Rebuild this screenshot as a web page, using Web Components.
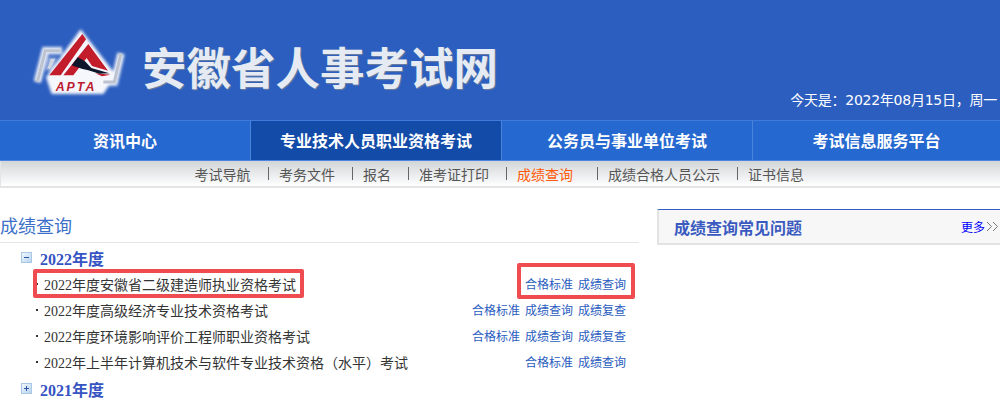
<!DOCTYPE html>
<html lang="zh-CN">
<head>
<meta charset="utf-8">
<title>成绩查询</title>
<style>
    html, body { margin: 0; background: #fff; overflow: hidden; }
    body { width: 1000px; height: 404px; font-family: "Liberation Serif", "Noto Sans CJK SC", sans-serif; }
</style>
</head>
<body>
<site-header></site-header>
<main-nav>
    <nav-cell>资讯中心</nav-cell>
    <nav-cell active>专业技术人员职业资格考试</nav-cell>
    <nav-cell>公务员与事业单位考试</nav-cell>
    <nav-cell>考试信息服务平台</nav-cell>
</main-nav>
<sub-nav></sub-nav>
<page-body>
    <result-panel>
        <year-group label="2022年度" open>
            <exam-row links="合格标准,成绩查询" marked>2022年度安徽省二级建造师执业资格考试</exam-row>
            <exam-row links="合格标准,成绩查询,成绩复查">2022年度高级经济专业技术资格考试</exam-row>
            <exam-row links="合格标准,成绩查询,成绩复查">2022年度环境影响评价工程师职业资格考试</exam-row>
            <exam-row links="合格标准,成绩查询">2022年上半年计算机技术与软件专业技术资格（水平）考试</exam-row>
        </year-group>
        <year-group label="2021年度"></year-group>
    </result-panel>
    <faq-panel></faq-panel>
</page-body>

<script>
class SiteHeader extends HTMLElement {
    constructor() {
        super();
        this.attachShadow({ mode: 'open' });
        this.shadowRoot.innerHTML = `
            <style>
                :host {
                    display: flex;
                    height: 120px;
                    box-sizing: border-box;
                    padding: 20px 3px 0 20px;
                    background: #2c5ebf;
                }
                svg { flex: none; display: block; }
                h1 {
                    margin: 21px 0 0 2px;
                    font: bold 44.5px/50px "Noto Sans CJK SC", sans-serif;
                    color: #e6ebf3;
                    text-shadow: 1px 1px 1px #6d7f9f;
                    white-space: nowrap;
                }
                .date {
                    margin: auto 0 10px auto;
                    font: 14px/20px "DejaVu Sans", "Noto Sans CJK SC", sans-serif;
                    letter-spacing: -0.25px;
                    color: #fff;
                    white-space: nowrap;
                }
            </style>
            <svg width="120" height="80" viewBox="0 0 360 240">
                <defs>
                    <filter id="glow" x="-20%" y="-20%" width="140%" height="140%"><feGaussianBlur stdDeviation="5"/></filter>
                    <filter id="soft" x="-10%" y="-10%" width="120%" height="120%"><feGaussianBlur stdDeviation="1.5"/></filter>
                </defs>
                <g filter="url(#glow)">
                    <path d="M84 112 H112 L96 152 H76 Z" fill="#8fa8dc"/>
                    <path d="M126 92 H76 L52 186" fill="none" stroke="#eef2fa" stroke-width="22"/>
                    <path d="M303 100 L283 186 H246" fill="none" stroke="#eef2fa" stroke-width="22"/>
                    <path d="M182 28 L288 165 L250 222 L95 222 L78 172 Z" fill="#f5f7fc"/>
                </g>
                <g filter="url(#soft)">
                    <path d="M122 92 H76 L52 186" fill="none" stroke="#bcc2ce" stroke-width="9"/>
                    <path d="M303 100 L283 186 H250" fill="none" stroke="#bcc2ce" stroke-width="9"/>
                    <path d="M92 116 H106 L92 146 H82 Z" fill="#cdd4e2"/>
                    <path d="M187 42 L198 58 L122 166 L88 166 Z" fill="#c31a2b"/>
                    <path d="M205 72 L264 152 L216 138 L200 114 L160 166 L130 166 Z" fill="#c31a2b"/>
                    <path d="M226 160 L272 164 L246 169 Z" fill="#c31a2b"/>
                    <path d="M155 136 L173 112 L195 124 L214 144 L268 160 L238 161 L205 151 L185 146 Z" fill="#11182a"/>
                </g>
                <text x="168" y="213" text-anchor="middle" font-family="Liberation Sans, sans-serif" font-size="37" font-weight="bold" font-style="italic" letter-spacing="6" fill="#bb1c30">APTA</text>
            </svg>
            <h1>安徽省人事考试网</h1>
            <div class="date">今天是：2022年08月15日，周一</div>
        `;
    }
}

class MainNav extends HTMLElement {
    constructor() {
        super();
        this.attachShadow({ mode: 'open' });
        this.shadowRoot.innerHTML = `
            <style>
                :host {
                    display: grid;
                    grid-template-columns: 250px 250px 250px 247px;
                    column-gap: 1px;
                    height: 41px;
                    box-sizing: border-box;
                    border-top: 1px solid #3f7bdc;
                    border-bottom: 1px solid #4a86e0;
                    background: #4a82dc;
                }
            </style>
            <slot></slot>
        `;
    }
}

class NavCell extends HTMLElement {
    constructor() {
        super();
        this.attachShadow({ mode: 'open' });
        this.shadowRoot.innerHTML = `
            <style>
                :host {
                    display: flex;
                    align-items: center;
                    justify-content: center;
                    padding-bottom: 1px;
                    background: #2568cf;
                    color: #fff;
                    font: bold 16px "Noto Sans CJK SC", sans-serif;
                    white-space: nowrap;
                }
                :host([active]) { background: #134ba8; }
            </style>
            <slot></slot>
        `;
    }
}

class SubNav extends HTMLElement {
    constructor() {
        super();
        const items = [
            ['考试导航', 17.4], ['考务文件', 17], ['报名', 17], ['准考证打印', 17],
            ['成绩查询', 24, 'on'], ['成绩合格人员公示', 17], ['证书信息', 0]
        ];
        this.attachShadow({ mode: 'open' });
        this.shadowRoot.innerHTML = `
            <style>
                :host {
                    display: flex;
                    align-items: center;
                    height: 27px;
                    box-sizing: border-box;
                    padding-left: 193.6px;
                    border-left: 1px solid #e3e5e7;
                    border-bottom: 2px solid #e2e4e6;
                    background: linear-gradient(#d2d5d8, #fff);
                    font: 14px "Noto Sans CJK SC", sans-serif;
                    color: #555;
                }
                span { white-space: nowrap; }
                .on { color: #ff5a0a; }
                i { width: 1px; height: 13px; margin-right: 10px; background: #666; }
            </style>
            ${items.map(([t, g, c], n) => `<span class="${c || ''}" style="margin-right:${g}px">${t}</span>${n < items.length - 1 ? '<i></i>' : ''}`).join('')}
        `;
    }
}

class PageBody extends HTMLElement {
    constructor() {
        super();
        this.attachShadow({ mode: 'open' });
        this.shadowRoot.innerHTML = `
            <style>
                :host {
                    display: grid;
                    grid-template-columns: 639px 343px;
                    column-gap: 18px;
                    padding-top: 21px;
                    align-items: start;
                }
            </style>
            <slot></slot>
        `;
    }
}

class ResultPanel extends HTMLElement {
    constructor() {
        super();
        this.attachShadow({ mode: 'open' });
        this.shadowRoot.innerHTML = `
            <style>
                :host { display: block; }
                h2 {
                    margin: 0;
                    height: 34px;
                    box-sizing: border-box;
                    padding-top: 3px;
                    border-bottom: 1px solid #e5e5e5;
                    font: 18px/26px "Noto Sans CJK SC", sans-serif;
                    color: #3c70c8;
                }
                .list { padding: 1px 0 0 21px; }
            </style>
            <h2>成绩查询</h2>
            <div class="list"><slot></slot></div>
        `;
    }
}

class YearGroup extends HTMLElement {
    constructor() {
        super();
        const open = this.hasAttribute('open');
        this.attachShadow({ mode: 'open' });
        this.shadowRoot.innerHTML = `
            <style>
                :host { display: block; }
                .head {
                    display: flex;
                    align-items: center;
                    gap: 8px;
                    height: 27px;
                    font: bold 16px "Liberation Serif", "Noto Sans CJK SC", serif;
                    color: #3654c2;
                }
                svg { flex: none; }
                .rows { display: flex; flex-direction: column; }
            </style>
            <div class="head">
                <svg width="11" height="11" viewBox="0 0 11 11">
                    <defs><linearGradient id="g" x1="0" y1="0" x2="1" y2="1"><stop offset="0" stop-color="#f4f9fd"/><stop offset="1" stop-color="#b5d3ee"/></linearGradient></defs>
                    <rect x=".5" y=".5" width="10" height="10" fill="url(#g)" stroke="#a9c8e6"/>
                    <path d="M3 5.5H8${open ? '' : 'M5.5 3V8'}" stroke="#2b55a8" fill="none"/>
                </svg>
                <span>${this.getAttribute('label')}</span>
            </div>
            <div class="rows"><slot></slot></div>
        `;
    }
}

class ExamRow extends HTMLElement {
    constructor() {
        super();
        const links = this.getAttribute('links').split(',');
        const marked = this.hasAttribute('marked');
        this.attachShadow({ mode: 'open' });
        this.shadowRoot.innerHTML = `
            <style>
                :host {
                    display: flex;
                    align-items: center;
                    position: relative;
                    height: 26px;
                    padding: 0 13px 0 15px;
                    font: 14px "Liberation Serif", "Noto Sans CJK SC", sans-serif;
                    color: #333;
                    white-space: nowrap;
                }
                .dot { width: 2px; height: 2px; margin-right: 6px; background: #333; }
                .links { display: flex; gap: 5px; margin-left: auto; font-size: 12px; color: #2a5cc0; }
                .mark {
                    position: absolute;
                    box-sizing: border-box;
                    border: 4px solid #ee4c50;
                    border-radius: 2px;
                }
                .a { left: 12px; top: -2px; width: 271px; height: 29px; }
                .b { left: 496px; top: -8px; width: 118px; height: 36px; }
            </style>
            <span class="dot"></span>
            <span><slot></slot></span>
            <span class="links">${links.map(l => `<span>${l}</span>`).join('')}</span>
            ${marked ? '<span class="mark a"></span><span class="mark b"></span>' : ''}
        `;
    }
}

class FaqPanel extends HTMLElement {
    constructor() {
        super();
        this.attachShadow({ mode: 'open' });
        this.shadowRoot.innerHTML = `
            <style>
                :host {
                    display: flex;
                    align-items: center;
                    height: 36px;
                    box-sizing: border-box;
                    padding: 0 1px 0 15px;
                    border-top: 1px solid #2f5fc0;
                    border-left: 2px solid #e3e3e3;
                    border-bottom: 2px solid #e3e3e3;
                    background: #f7f7f7;
                }
                strong { font: bold 16px "Liberation Serif", "Noto Sans CJK SC", serif; color: #3a5abf; }
                .more { margin-left: auto; font: 12px "Noto Sans CJK SC", sans-serif; color: #00f; }
                svg { margin-left: 1px; }
            </style>
            <strong>成绩查询常见问题</strong>
            <span class="more">更多</span>
            <svg width="13" height="11" viewBox="0 0 13 11" fill="none" stroke="#777">
                <path d="M1 1l4.5 4.5L1 10M7 1l4.5 4.5L7 10"/>
            </svg>
        `;
    }
}

customElements.define('site-header', SiteHeader);
customElements.define('main-nav', MainNav);
customElements.define('nav-cell', NavCell);
customElements.define('sub-nav', SubNav);
customElements.define('page-body', PageBody);
customElements.define('result-panel', ResultPanel);
customElements.define('year-group', YearGroup);
customElements.define('exam-row', ExamRow);
customElements.define('faq-panel', FaqPanel);
</script>
</body>
</html>
